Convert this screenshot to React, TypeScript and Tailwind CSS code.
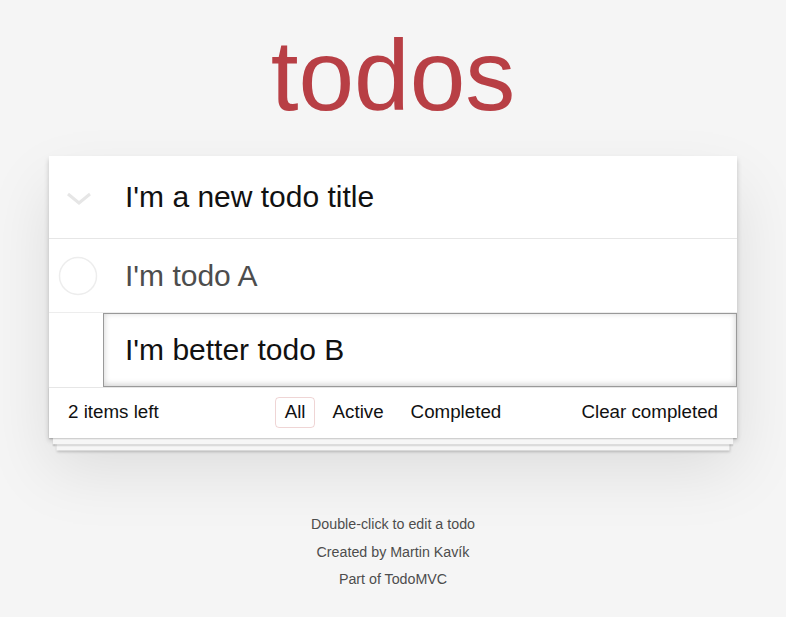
import React from 'react';

const font = "font-['Liberation_Sans','Helvetica_Neue',Helvetica,Arial,sans-serif]";

function ToggleAll() {
  return (
    <div className="w-[76px] h-full flex items-center pl-[18px] shrink-0">
      <svg width="24" height="14" viewBox="0 0 24 14" className="mt-[4px]">
        <polyline points="1,2 12,11 23,2" fill="none" stroke="#e6e6e6" strokeWidth="3" />
      </svg>
    </div>
  );
}

function Circle() {
  return (
    <div className="w-[76px] h-full flex items-center pl-[9px] shrink-0">
      <svg width="40" height="40" viewBox="0 0 40 40">
        <circle cx="20" cy="20" r="18.5" fill="none" stroke="#ededed" strokeWidth="1.5" />
      </svg>
    </div>
  );
}

export default function App() {
  const filters = ['All', 'Active', 'Completed'];

  return (
    <div className={`min-h-screen bg-[#f5f5f5] ${font} text-[#111] pt-[25px]`}>
      <h1 className="text-center text-[100px] leading-[100px] font-extralight text-[#b83f45]">todos</h1>

      <section className="mt-[31px] mx-auto w-[688px] bg-white shadow-[0_2.5px_5px_0_rgba(0,0,0,0.2),0_31px_62px_0_rgba(0,0,0,0.1)]">
        <header className="h-[83px] flex items-center border-b border-[#e6e6e6]">
          <ToggleAll />
          <input
            readOnly
            defaultValue="I'm a new todo title"
            className={`flex-1 h-full pr-[20px] text-[30px] text-[#111] bg-transparent outline-none ${font}`}
          />
        </header>

        <ul>
          <li className="h-[74px] flex items-center border-b border-[#ededed]">
            <Circle />
            <span className="text-[30px] text-[#4d4d4d]">I'm todo A</span>
          </li>
          <li className="h-[74px] flex pl-[54px]">
            <input
              readOnly
              defaultValue="I'm better todo B"
              className={`flex-1 h-full border border-[#999] pl-[21px] pr-[20px] text-[30px] text-[#111] outline-none shadow-[inset_0_-1.25px_6px_0_rgba(0,0,0,0.2)] ${font}`}
            />
          </li>
        </ul>

        <footer className="h-[51px] border-t border-[#e6e6e6] px-[19px] pb-[1px] grid grid-cols-[1fr_auto_1fr] items-center text-[18.75px] bg-white shadow-[0_1.25px_1.25px_rgba(0,0,0,0.2),0_10px_0_-3.75px_#f6f6f6,0_11.25px_1.25px_-3.75px_rgba(0,0,0,0.2),0_20px_0_-7.5px_#f6f6f6,0_21.25px_2.5px_-7.5px_rgba(0,0,0,0.2)]">
          <span>2 items left</span>
          <ul className="flex items-center">
            {filters.map((f) => (
              <li key={f}>
                <a
                  className={`mx-[3.75px] h-[31px] px-[8.75px] flex items-center rounded-[4px] border ${
                    f === 'All' ? 'border-[rgba(175,47,47,0.2)]' : 'border-transparent'
                  }`}
                >
                  {f}
                </a>
              </li>
            ))}
          </ul>
          <span className="justify-self-end">Clear completed</span>
        </footer>
      </section>

      <footer className="mt-[79px] text-center text-[14.25px] leading-none text-[#4d4d4d] flex flex-col gap-[13.25px] [text-shadow:0_1px_0_rgba(255,255,255,0.5)]">
        <p>Double-click to edit a todo</p>
        <p>Created by Martin Kavík</p>
        <p>Part of TodoMVC</p>
      </footer>
    </div>
  );
}
